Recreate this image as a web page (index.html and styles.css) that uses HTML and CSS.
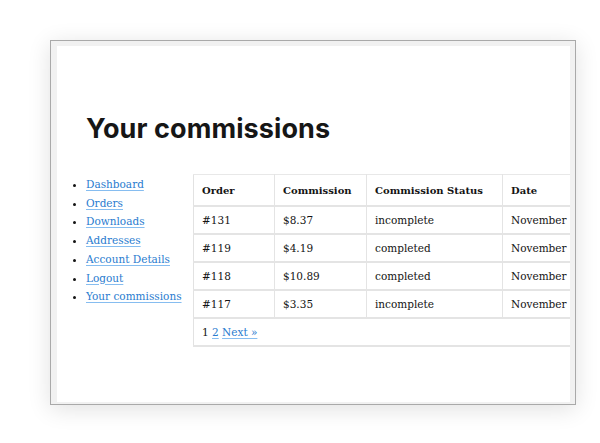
FILE: index.html
```html
<!DOCTYPE html>
<html>
<head>
<meta charset="utf-8">
<link rel="stylesheet" href="styles.css">
</head>
<body>
<div class="frame">
  <div class="inner">
    <h1 class="title">Your commissions</h1>
    <div class="account">
      <ul class="nav">
        <li><a href="#">Dashboard</a></li>
        <li><a href="#">Orders</a></li>
        <li><a href="#">Downloads</a></li>
        <li><a href="#">Addresses</a></li>
        <li><a href="#">Account Details</a></li>
        <li><a href="#">Logout</a></li>
        <li><a href="#">Your commissions</a></li>
      </ul>
      <div class="tablewrap">
        <table class="commissions">
          <thead>
            <tr>
              <th class="c-order">Order</th>
              <th class="c-comm">Commission</th>
              <th class="c-status">Commission Status</th>
              <th class="c-date">Date</th>
            </tr>
          </thead>
          <tbody>
            <tr><td>#131</td><td>$8.37</td><td>incomplete</td><td>November 13, 2017</td></tr>
            <tr><td>#119</td><td>$4.19</td><td>completed</td><td>November 10, 2017</td></tr>
            <tr><td>#118</td><td>$10.89</td><td>completed</td><td>November 10, 2017</td></tr>
            <tr><td>#117</td><td>$3.35</td><td>incomplete</td><td>November 9, 2017</td></tr>
          </tbody>
          <tfoot>
            <tr><td colspan="4" class="pager"><span class="current">1</span> <a href="#">2</a> <a href="#">Next &raquo;</a></td></tr>
          </tfoot>
        </table>
      </div>
    </div>
  </div>
</div>
</body>
</html>
```

FILE: styles.css
```css
html, body {
  margin: 0;
  padding: 0;
  background: #fff;
}
body {
  width: 600px;
  height: 443px;
  overflow: hidden;
}
.frame {
  margin: 40px 0 0 50px;
  width: 526px;
  height: 365px;
  border: 1px solid #a9a9a9;
  background: #f1f1f1;
  padding: 5px 5px 2px 6px;
  box-sizing: border-box;
  box-shadow: 0 4px 22px rgba(0, 0, 0, 0.12);
}
.inner {
  background: #fff;
  height: 100%;
  overflow: hidden;
  padding-left: 29px;
  box-sizing: border-box;
}
.title {
  margin: 67px 0 29px 0;
  font-family: Inter, "Noto Sans", sans-serif;
  font-weight: 700;
  font-size: 27px;
  line-height: 32px;
  color: #161616;
  letter-spacing: 0.1px;
}
.account {
  display: flex;
  align-items: flex-start;
  font-family: "DejaVu Serif", serif;
  font-size: 10.5px;
  color: #141414;
}
.nav {
  margin: 0;
  padding: 0;
  width: 107px;
  flex: none;
  list-style: disc outside;
  line-height: 18.7px;
}
.nav li {
  padding-top: 1px;
  margin-bottom: -1px;
}
.nav a, .pager a {
  color: #2a7ccf;
  text-decoration: underline;
  text-decoration-color: #86bdf0;
  text-underline-offset: 2px;
}
.tablewrap {
  flex: none;
}
.commissions {
  border-collapse: collapse;
  border-left: 1px solid #e2e2e2;
  border-top: 1px solid #e8e8e8;
  white-space: nowrap;
}
.commissions th, .commissions td {
  text-align: left;
  padding: 0 8px;
  border-bottom: 2px solid #e4e4e4;
  border-right: 1px solid #e4e4e4;
}
.commissions th {
  height: 30px;
  font-weight: 700;
  font-size: 10px;
}
.commissions td {
  height: 26px;
}
.c-order { width: 64px; }
.c-comm { width: 75px; }
.c-status { width: 119px; }
.c-date { width: 120px; }
.commissions .pager {
  border-right: none;
}
.pager .current {
  color: #141414;
}
```
